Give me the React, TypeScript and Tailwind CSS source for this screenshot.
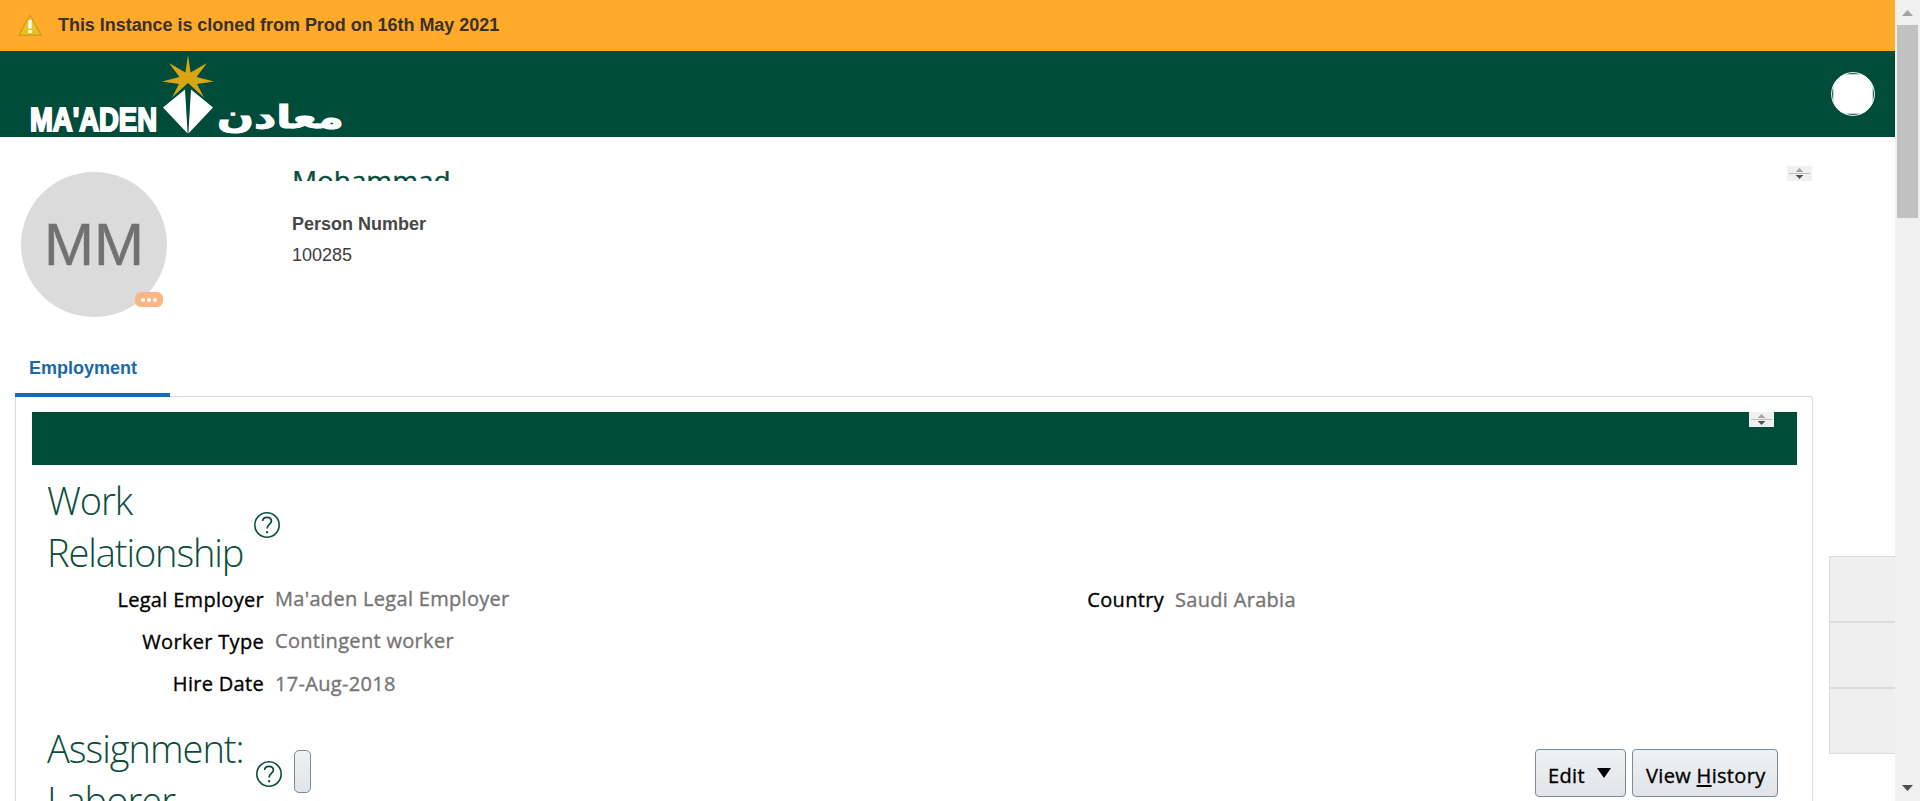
import React from "react";

const segoe = "font-['Open_Sans','Noto_Sans',sans-serif]";

function WarningIcon() {
  return (
    <svg width="26" height="24" viewBox="0 0 26 24" className="block">
      <defs>
        <linearGradient id="warn" x1="0" y1="0" x2="0" y2="1">
          <stop offset="0" stopColor="#ecc93a" />
          <stop offset="1" stopColor="#e6bf1e" />
        </linearGradient>
      </defs>
      <path d="M13 2 L24.2 22.3 H1.8 Z" fill="url(#warn)" stroke="#d59c1c" strokeWidth="1.5" strokeLinejoin="round" />
      <rect x="11.3" y="7" width="3.4" height="8.6" fill="#fffdf2" />
      <rect x="11.3" y="17" width="3.4" height="3" fill="#fffdf2" />
    </svg>
  );
}

function Logo() {
  return (
    <svg width="320" height="86" viewBox="25 51 320 86" className="block">
      <path
        d="M188 55 L190.6 72.5 L207 63 L196.5 77 L214 81.5 L197 84 L204 97.5 L188 83 L172 97.5 L179 84 L162 81.5 L179.5 77 L169 63 L185.4 72.5 Z"
        fill="#d9a514"
      />
      <path d="M185 89.5 L163 107.5 L187.6 133.5 Z" fill="#fff" />
      <path d="M191 89.5 L213 107.5 L188.4 133.5 Z" fill="#fff" />
      <text x="30" y="131" textLength="127" lengthAdjust="spacingAndGlyphs" fill="#fff" stroke="#fff" strokeWidth="2" fontSize="33" fontWeight="700" fontFamily="'Liberation Sans Narrow','Liberation Sans',sans-serif">
        MA'ADEN
      </text>
      <text x="217" y="127.5" textLength="127" lengthAdjust="spacingAndGlyphs" fill="#fff" stroke="#fff" strokeWidth="1" fontSize="32" fontWeight="700" fontFamily="'DejaVu Sans',sans-serif">
        معادن
      </text>
    </svg>
  );
}

function ProfileDot() {
  return (
    <svg width="44" height="44" viewBox="0 0 44 44" className="block">
      <defs>
        <clipPath id="face">
          <rect x="2.2" y="2.2" width="39.6" height="39.6" />
        </clipPath>
      </defs>
      <circle cx="22" cy="22" r="21.4" fill="none" stroke="#fff" strokeWidth="1" />
      <circle cx="22" cy="22" r="21.4" fill="#fff" clipPath="url(#face)" />
    </svg>
  );
}

function Spinner() {
  return (
    <svg width="25" height="15" viewBox="0 0 25 15" className="block shrink-0">
      <rect width="25" height="15" fill="#f0f0f0" />
      <path d="M12.5 2 L16.3 6 H8.7 Z" fill="#a3a3a3" />
      <rect x="2" y="7" width="21" height="1" fill="#bdbdbd" />
      <path d="M12.5 13 L16.3 9 H8.7 Z" fill="#505050" />
    </svg>
  );
}

function Help() {
  return (
    <svg width="26" height="26" viewBox="0 0 26 26" className="block shrink-0" fill="none" stroke="#0b4d3d">
      <circle cx="13" cy="13" r="12.2" strokeWidth="1.6" />
      <path d="M8.6 9 C8.8 6.4 10.6 5.3 13 5.3 C15.6 5.3 17.4 6.8 17.4 9.1 C17.4 12.4 13.1 12.6 13.1 16.6" strokeWidth="1.7" />
      <rect x="12.1" y="19.2" width="2" height="2" fill="#0b4d3d" stroke="none" />
    </svg>
  );
}

function Scrollbar() {
  return (
    <div className="flex h-full w-[25px] flex-col items-center bg-[#f0f0f0]">
      <svg width="11" height="6" viewBox="0 0 11 6" className="mt-[10px] block">
        <path d="M5.5 0 L11 6 H0 Z" fill="#a3a3a3" />
      </svg>
      <div className="mt-[9px] h-[193px] w-[21px] bg-[#c1c1c1]" />
      <svg width="11" height="6" viewBox="0 0 11 6" className="mt-auto mb-[10px] block">
        <path d="M5.5 6 L11 0 H0 Z" fill="#505050" />
      </svg>
    </div>
  );
}

function Field({ label, value, lift = "" }: { label: string; value: string; lift?: string }) {
  return (
    <div className="flex h-[42px] text-[20px] leading-[42px] tracking-[0.31px] whitespace-nowrap">
      <div className="w-[217px] text-right text-black [-webkit-text-stroke:0.35px_#000]">{label}</div>
      <div className={`ml-[11px] text-[#757575] [-webkit-text-stroke:0.35px_#757575] ${lift}`}>{value}</div>
    </div>
  );
}

export default function App() {
  return (
    <div className="flex h-[801px] w-[1920px] overflow-hidden bg-white font-['Liberation_Sans',sans-serif]">
      <div className="flex w-[1895px] flex-col">
        <div className="flex h-[51px] shrink-0 items-center bg-[#ffaa2b] pl-[17px]">
          <div className="-mt-[2px]">
            <WarningIcon />
          </div>
          <span className="-mt-[2px] ml-[15px] text-[18px] leading-[24px] font-bold tracking-[-0.04px] text-[#3a3226]">This Instance is cloned from Prod on 16th May 2021</span>
        </div>
        <header className="flex h-[86px] shrink-0 items-center justify-between bg-[#004c3b] pr-[20px] pl-[25px]">
          <Logo />
          <ProfileDot />
        </header>
        <div className="flex h-[664px]">
          <main className="ml-[15px] flex w-[1798px] shrink-0 flex-col">
            <section className="flex h-[197px] shrink-0">
              <div className="relative mt-[35px] ml-[6px] flex h-[145px] w-[146px] items-center justify-center rounded-full bg-[#dbdbdb]">
                <span className="text-[60px] leading-[60px] text-[#717171] [font-family:'Liberation_Sans',Arial,sans-serif] [-webkit-text-stroke:0.4px_#717171]">MM</span>
                <div className="absolute top-[120px] left-[114px] flex h-[15px] w-[28px] items-center justify-center gap-[2px] rounded-[6px] bg-[#f9b582]">
                  <i className="size-[4px] rounded-full bg-white" />
                  <i className="size-[4px] rounded-full bg-white" />
                  <i className="size-[4px] rounded-full bg-white" />
                </div>
              </div>
              <div className="mt-[34px] ml-[125px] grow">
                <div className="h-[10px] overflow-hidden">
                  <div className={`${segoe} -mt-[11px] text-[28px] leading-[40px] tracking-[-0.1px] text-[#0b4d3d] [-webkit-text-stroke:0.4px_#0b4d3d]`}>Mohammad</div>
                </div>
                <div className="mt-[31px] text-[18px] leading-[24px] font-bold text-[#474747]">Person Number</div>
                <div className="mt-[7px] text-[18px] leading-[24px] text-[#404040]">100285</div>
              </div>
              <div className="mt-[29px] mr-px">
                <Spinner />
              </div>
            </section>
            <div className="z-10 mt-[11px] h-[52px] w-[155px] shrink-0 border-b-4 border-[#146dba] pl-[14px]">
              <div className="pt-[11px] text-[18px] leading-[24px] font-bold text-[#1b68a8]">Employment</div>
            </div>
            <section className={`${segoe} -mt-px h-[405px] grow rounded-tr-[3px] border border-b-0 border-[#d6dbde] pt-[15px] pl-[16px]`}>
              <div className="flex h-[53px] w-[1765px] justify-end bg-[#004c3b] pr-[23px]">
                <Spinner />
              </div>
              <div className="flex pt-[9px] pl-[15px]">
                <h2 className="h-[105px] w-[198px] text-[38px] leading-[52px] font-light tracking-[-1.1px] text-[#0b4d3d]">Work Relationship</h2>
                <div className="mt-[38px] ml-[9px]">
                  <Help />
                </div>
              </div>
              <div className="flex pl-[15px]">
                <div className="w-[900px]">
                  <Field label="Legal Employer" value="Ma'aden Legal Employer" lift="-mt-px" />
                  <Field label="Worker Type" value="Contingent worker" lift="-mt-px" />
                  <Field label="Hire Date" value="17-Aug-2018" />
                </div>
                <Field label="Country" value="Saudi Arabia" />
              </div>
              <div className="flex pt-[17px] pl-[15px]">
                <h2 className="w-[198px] text-[38px] leading-[52px] font-light tracking-[-1px] text-[#0b4d3d]">Assignment: Laborer</h2>
                <div className="mt-[39px] ml-[11px]">
                  <Help />
                </div>
                <div className="mt-[28px] ml-[12px] h-[43px] w-[17px] rounded-[5px] border border-[#7b8b9b] bg-linear-to-b from-[#eff2f4] to-[#e0e4e8]" />
                <div className="mt-[27px] mr-[34px] ml-auto flex gap-[6px] text-[20px] leading-[26px] tracking-[0.33px] text-black [-webkit-text-stroke:0.35px_#000]">
                  <button className="flex h-[48px] w-[91px] rounded-[4px] border border-[#7b8b9b] bg-linear-to-b from-[#eff2f4] to-[#e0e4e8] pt-[13px] pl-[12px]">
                    Edit
                    <svg width="14" height="10" viewBox="0 0 14 10" className="mt-[5px] ml-[12px]">
                      <path d="M0 0 H14 L7 10 Z" fill="#000" />
                    </svg>
                  </button>
                  <button className="flex h-[48px] w-[146px] rounded-[4px] border border-[#7b8b9b] bg-linear-to-b from-[#eff2f4] to-[#e0e4e8] pt-[13px] pl-[13px] whitespace-pre">
                    View <span className="underline decoration-2 underline-offset-2">H</span>istory
                  </button>
                </div>
              </div>
            </section>
          </main>
          <aside className="mt-[419px] ml-[16px] flex h-[198px] w-[66px] flex-col border-y border-l border-[#dadddf] bg-[#efefef]">
            <div className="h-[66px] border-b-2 border-[#dadddf]" />
            <div className="h-[66px] border-b-2 border-[#dadddf]" />
            <div className="h-[64px]" />
          </aside>
        </div>
      </div>
      <Scrollbar />
    </div>
  );
}
